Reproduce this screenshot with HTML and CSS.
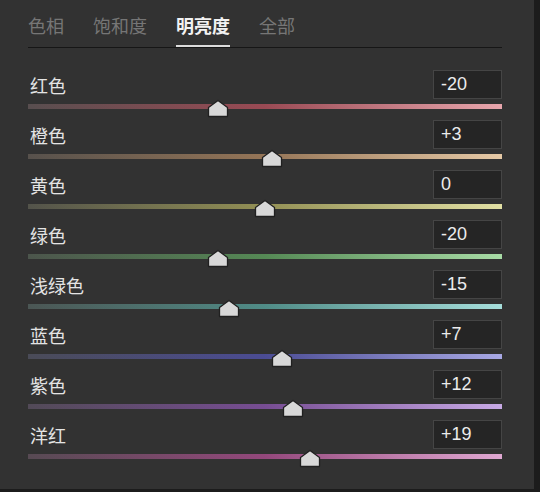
FILE: index.html
```html
<!DOCTYPE html>
<html lang="zh-CN">
<head>
    <meta charset="UTF-8">
    <meta name="viewport" content="width=device-width, initial-scale=1.0">
    <title>HSL 明亮度</title>
    <link rel="stylesheet" href="styles.css">
</head>
<body>
    <div class="panel">
        <div class="tabs">
            <div class="tab">色相</div>
            <div class="tab">饱和度</div>
            <div class="tab active">明亮度</div>
            <div class="tab">全部</div>
        </div>

        <div class="rows">
            <div class="row">
                <div class="row-head">
                    <span class="label">红色</span>
                    <input class="value" type="text" value="-20">
                </div>
                <div class="track red">
                    <svg class="thumb" style="left: 40%" viewBox="0 0 22 19"><path d="M11 1.5 L20.5 8.5 V17.5 H1.5 V8.5 Z"/></svg>
                </div>
            </div>
            <div class="row">
                <div class="row-head">
                    <span class="label">橙色</span>
                    <input class="value" type="text" value="+3">
                </div>
                <div class="track orange">
                    <svg class="thumb" style="left: 51.5%" viewBox="0 0 22 19"><path d="M11 1.5 L20.5 8.5 V17.5 H1.5 V8.5 Z"/></svg>
                </div>
            </div>
            <div class="row">
                <div class="row-head">
                    <span class="label">黄色</span>
                    <input class="value" type="text" value="0">
                </div>
                <div class="track yellow">
                    <svg class="thumb" style="left: 50%" viewBox="0 0 22 19"><path d="M11 1.5 L20.5 8.5 V17.5 H1.5 V8.5 Z"/></svg>
                </div>
            </div>
            <div class="row">
                <div class="row-head">
                    <span class="label">绿色</span>
                    <input class="value" type="text" value="-20">
                </div>
                <div class="track green">
                    <svg class="thumb" style="left: 40%" viewBox="0 0 22 19"><path d="M11 1.5 L20.5 8.5 V17.5 H1.5 V8.5 Z"/></svg>
                </div>
            </div>
            <div class="row">
                <div class="row-head">
                    <span class="label">浅绿色</span>
                    <input class="value" type="text" value="-15">
                </div>
                <div class="track aqua">
                    <svg class="thumb" style="left: 42.5%" viewBox="0 0 22 19"><path d="M11 1.5 L20.5 8.5 V17.5 H1.5 V8.5 Z"/></svg>
                </div>
            </div>
            <div class="row">
                <div class="row-head">
                    <span class="label">蓝色</span>
                    <input class="value" type="text" value="+7">
                </div>
                <div class="track blue">
                    <svg class="thumb" style="left: 53.5%" viewBox="0 0 22 19"><path d="M11 1.5 L20.5 8.5 V17.5 H1.5 V8.5 Z"/></svg>
                </div>
            </div>
            <div class="row">
                <div class="row-head">
                    <span class="label">紫色</span>
                    <input class="value" type="text" value="+12">
                </div>
                <div class="track purple">
                    <svg class="thumb" style="left: 56%" viewBox="0 0 22 19"><path d="M11 1.5 L20.5 8.5 V17.5 H1.5 V8.5 Z"/></svg>
                </div>
            </div>
            <div class="row">
                <div class="row-head">
                    <span class="label">洋红</span>
                    <input class="value" type="text" value="+19">
                </div>
                <div class="track magenta">
                    <svg class="thumb" style="left: 59.5%" viewBox="0 0 22 19"><path d="M11 1.5 L20.5 8.5 V17.5 H1.5 V8.5 Z"/></svg>
                </div>
            </div>
        </div>
    </div>
</body>
</html>
```

FILE: styles.css
```css
body {
    margin: 0;
    padding: 0;
    background: #1c1c1c;
    font-family: "Noto Sans CJK SC", "Liberation Sans", sans-serif;
}
.panel {
    width: 534px;
    height: 489px;
    box-sizing: border-box;
    padding: 0 32px 0 28px;
    background: #323232;
}

/* Tabs */
.tabs {
    display: flex;
    gap: 29px;
    padding-top: 14px;
    border-bottom: 1px solid #161616;
}
.tab {
    font-size: 18px;
    line-height: 22px;
    padding-bottom: 9px;
    color: #767676;
    border-bottom: 2px solid transparent;
}
.tab.active {
    color: #f2f2f2;
    font-weight: bold;
    border-bottom-color: #dcdcdc;
}

/* Slider rows */
.rows {
    padding-top: 22px;
}
.row {
    height: 50px;
}
.row-head {
    display: flex;
    justify-content: space-between;
    align-items: center;
    height: 29px;
}
.label {
    font-size: 18px;
    color: #e4e4e4;
    padding-left: 2px;
}
.value {
    width: 69px;
    height: 29px;
    box-sizing: border-box;
    padding: 0 0 0 7px;
    background: #252525;
    border: 1px solid #454545;
    color: #ececec;
    font-family: "Liberation Sans", Arial, sans-serif;
    font-size: 18px;
    outline: none;
}
.track {
    position: relative;
    height: 5px;
    margin-top: 5px;
}
.thumb {
    position: absolute;
    top: -5px;
    width: 22px;
    height: 19px;
    transform: translateX(-50%);
}
.thumb path {
    fill: #d8d8d8;
    stroke: #202020;
    stroke-width: 1.3;
    stroke-linejoin: round;
}

.red     { background: linear-gradient(to right, #584e4f, #9a4a54 50%, #e8a6ad); }
.orange  { background: linear-gradient(to right, #57514c, #957557 50%, #e6c9a6); }
.yellow  { background: linear-gradient(to right, #53534a, #939055 50%, #e2e0a4); }
.green   { background: linear-gradient(to right, #4c554c, #558955 50%, #a8dca6); }
.aqua    { background: linear-gradient(to right, #4b5654, #508c87 50%, #a6dedb); }
.blue    { background: linear-gradient(to right, #4a4b57, #4b4c94 50%, #a8a8e4); }
.purple  { background: linear-gradient(to right, #524a57, #774d93 50%, #c8aae6); }
.magenta { background: linear-gradient(to right, #574a53, #94487c 50%, #e0a8d2); }
```
